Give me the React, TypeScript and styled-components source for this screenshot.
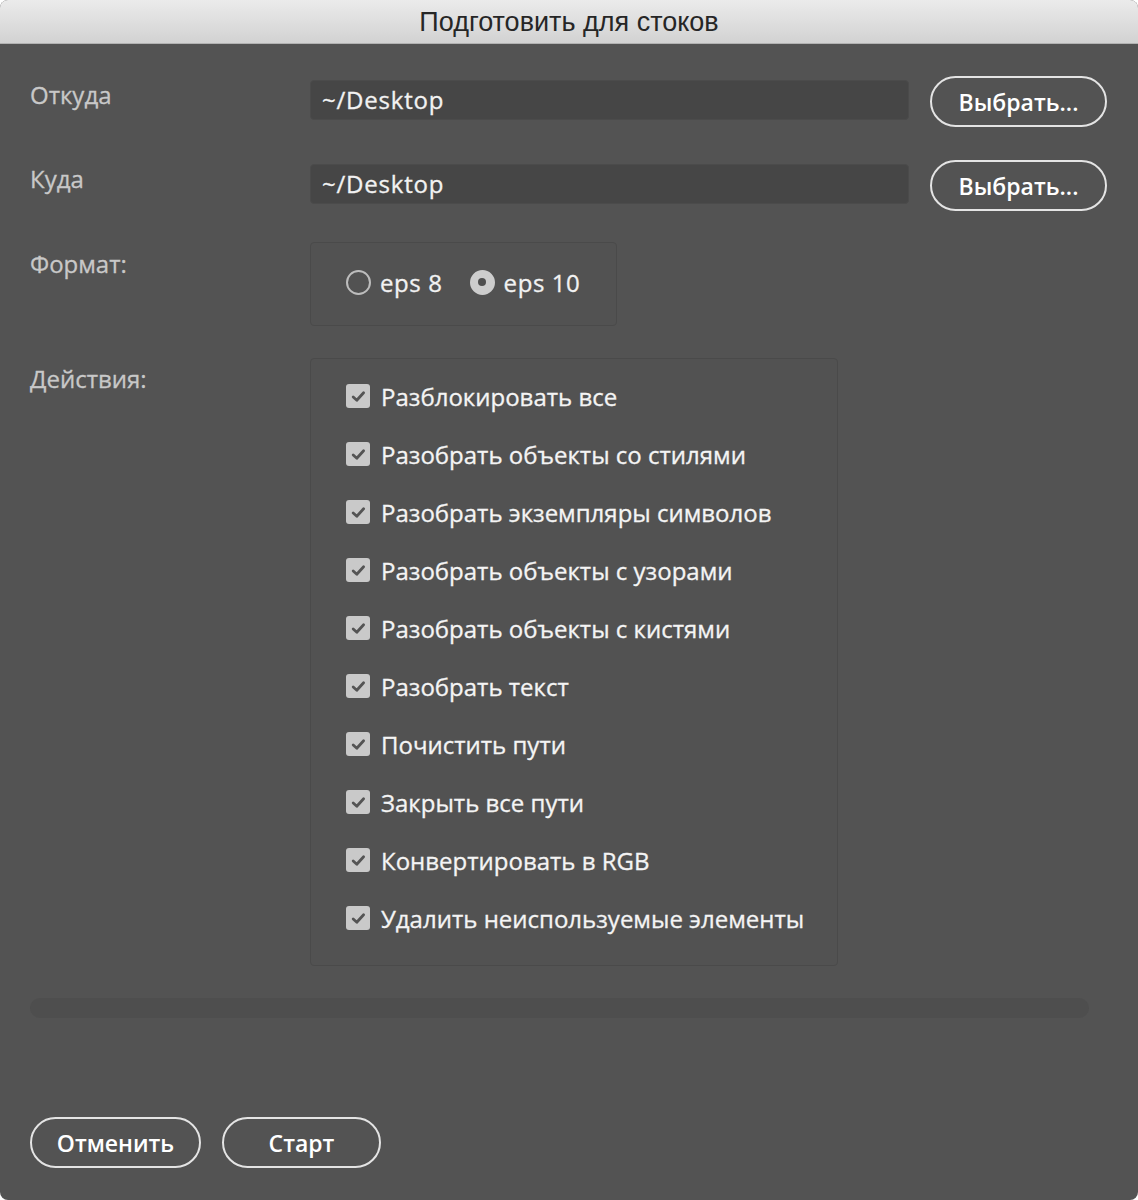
import React, { useState } from "react";
import styled, { createGlobalStyle } from "styled-components";

const GlobalStyle = createGlobalStyle`
  html, body {
    margin: 0;
    padding: 0;
    background: #ffffff;
  }
  * {
    box-sizing: border-box;
  }
`;

const Window = styled.div`
  width: 1138px;
  height: 1200px;
  background: #535353;
  border-radius: 8px;
  overflow: hidden;
  display: flex;
  flex-flow: column;
  font-family: "Open Sans", "Noto Sans", sans-serif;
`;

const TitleBar = styled.div`
  height: 44px;
  flex-shrink: 0;
  display: flex;
  align-items: center;
  justify-content: center;
  padding-top: 2px;
  background: linear-gradient(#ebebeb, #d2d2d2);
  border-bottom: 1px solid #b2b2b2;
  font-family: "Liberation Sans", Arial, sans-serif;
  font-size: 27px;
  color: #262626;
`;

const Body = styled.div`
  flex: 1;
  display: flex;
  flex-flow: column;
  padding: 32px 31px 32px 30px;
`;

const FieldRow = styled.div<{ $gap?: number }>`
  display: grid;
  grid-template-columns: 259px 1fr auto;
  column-gap: 21px;
  align-items: start;
  margin-bottom: ${(p) => p.$gap ?? 32}px;
`;

const Label = styled.div<{ $top: number }>`
  padding-top: ${(p) => p.$top}px;
  font-size: 24px;
  color: #c8c8c8;
  line-height: 1;
  -webkit-text-stroke: 0.3px #c8c8c8;
`;

const PathInput = styled.div`
  margin-top: 4px;
  height: 40px;
  background: #464646;
  border: 1px solid #4b4b4b;
  border-radius: 4px;
  display: flex;
  align-items: center;
  padding-left: 11px;
  padding-bottom: 1px;
  font-size: 24px;
  letter-spacing: 0.8px;
  color: #f2f2f2;
  -webkit-text-stroke: 0.3px #f2f2f2;
`;

const PillButton = styled.button<{ $width: number }>`
  width: ${(p) => p.$width}px;
  height: 51px;
  border: 2px solid #e4e4e4;
  border-radius: 26px;
  background: transparent;
  color: #ffffff;
  font-family: "Open Sans", "Noto Sans", sans-serif;
  font-size: 23px;
  font-weight: 600;
  padding: 0;
  cursor: pointer;
`;

const GroupBox = styled.div<{ $width: number }>`
  width: ${(p) => p.$width}px;
  border: 1px solid #4a4a4a;
  border-radius: 4px;
  background: #525252;
`;

const RadioGroup = styled(GroupBox)`
  height: 84px;
  display: flex;
  align-items: center;
  padding: 0 0 4px 35px;
  gap: 27px;
`;

const RadioItem = styled.label`
  display: flex;
  align-items: center;
  gap: 9px;
  font-size: 24px;
  letter-spacing: 0.6px;
  color: #f2f2f2;
  -webkit-text-stroke: 0.3px #f2f2f2;
  cursor: pointer;
`;

const RadioCircle = styled.span<{ $on: boolean }>`
  width: 25px;
  height: 25px;
  border-radius: 50%;
  border: 2px solid ${(p) => (p.$on ? "#cdcdcd" : "#bdbdbd")};
  background: ${(p) => (p.$on ? "#cdcdcd" : "transparent")};
  display: flex;
  align-items: center;
  justify-content: center;
  &::after {
    content: "";
    display: ${(p) => (p.$on ? "block" : "none")};
    width: 8px;
    height: 8px;
    border-radius: 50%;
    background: #4f4f4f;
  }
`;

const ActionsBox = styled(GroupBox)`
  padding: 8px 0 18px 35px;
  display: flex;
  flex-flow: column;
`;

const CheckRow = styled.label`
  height: 58px;
  display: flex;
  align-items: center;
  gap: 11px;
  font-size: 24px;
  color: #f4f4f4;
  -webkit-text-stroke: 0.3px #f4f4f4;
  cursor: pointer;
`;

const CheckBox = styled.span`
  width: 24px;
  height: 24px;
  border-radius: 3px;
  background: #c9c9c9;
  display: flex;
  align-items: center;
  justify-content: center;
  flex-shrink: 0;
`;

const Progress = styled.div`
  width: 1059px;
  height: 20px;
  border-radius: 10px;
  background: #4e4e4e;
  margin-bottom: auto;
`;

const Footer = styled.div`
  display: flex;
  gap: 21px;
`;

const actions = [
  "Разблокировать все",
  "Разобрать объекты со стилями",
  "Разобрать экземпляры символов",
  "Разобрать объекты с узорами",
  "Разобрать объекты с кистями",
  "Разобрать текст",
  "Почистить пути",
  "Закрыть все пути",
  "Конвертировать в RGB",
  "Удалить неиспользуемые элементы",
];

const CheckMark = () => (
  <svg width="15" height="13" viewBox="0 0 15 13">
    <path
      d="M2.2 7 L5.8 10.2 L12.6 2.8"
      fill="none"
      stroke="#545454"
      strokeWidth="2.8"
      strokeLinecap="round"
      strokeLinejoin="round"
    />
  </svg>
);

const App = () => {
  const [format, setFormat] = useState("eps10");

  return (
    <>
      <GlobalStyle />
      <Window>
        <TitleBar>Подготовить для стоков</TitleBar>
        <Body>
          <FieldRow $gap={33}>
            <Label $top={7}>Откуда</Label>
            <PathInput>~/Desktop</PathInput>
            <PillButton $width={177}>Выбрать...</PillButton>
          </FieldRow>
          <FieldRow $gap={31}>
            <Label $top={7}>Куда</Label>
            <PathInput>~/Desktop</PathInput>
            <PillButton $width={177}>Выбрать...</PillButton>
          </FieldRow>
          <FieldRow>
            <Label $top={10}>Формат:</Label>
            <RadioGroup $width={307}>
              <RadioItem onClick={() => setFormat("eps8")}>
                <RadioCircle $on={format === "eps8"} />
                eps 8
              </RadioItem>
              <RadioItem onClick={() => setFormat("eps10")}>
                <RadioCircle $on={format === "eps10"} />
                eps 10
              </RadioItem>
            </RadioGroup>
          </FieldRow>
          <FieldRow>
            <Label $top={9}>Действия:</Label>
            <ActionsBox $width={528}>
              {actions.map((a) => (
                <CheckRow key={a}>
                  <CheckBox>
                    <CheckMark />
                  </CheckBox>
                  {a}
                </CheckRow>
              ))}
            </ActionsBox>
          </FieldRow>
          <Progress />
          <Footer>
            <PillButton $width={171}>Отменить</PillButton>
            <PillButton $width={159}>Старт</PillButton>
          </Footer>
        </Body>
      </Window>
    </>
  );
};

export default App;
